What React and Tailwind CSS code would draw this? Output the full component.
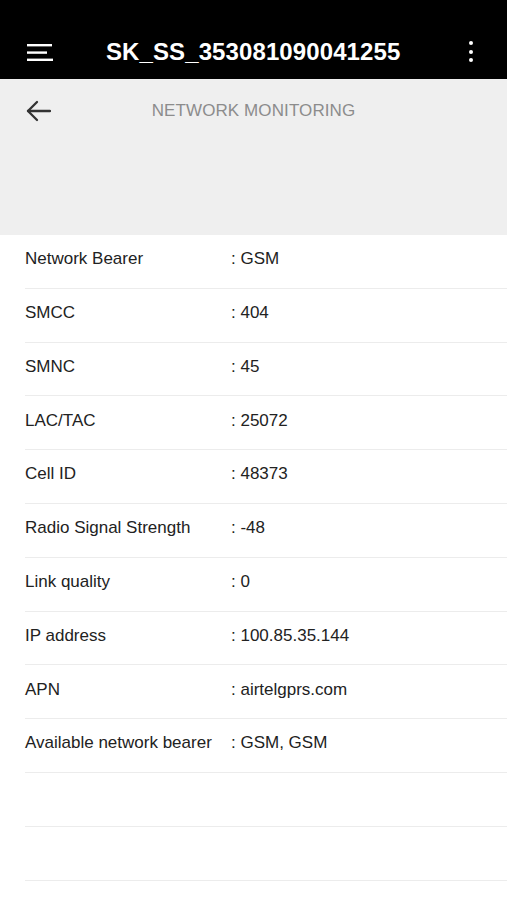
const rows = [
  ["Network Bearer", "GSM"],
  ["SMCC", "404"],
  ["SMNC", "45"],
  ["LAC/TAC", "25072"],
  ["Cell ID", "48373"],
  ["Radio Signal Strength", "-48"],
  ["Link quality", "0"],
  ["IP address", "100.85.35.144"],
  ["APN", "airtelgprs.com"],
  ["Available network bearer", "GSM, GSM"],
  ["", ""],
  ["", ""],
];

export default function App() {
  return (
    <div className="w-[507px] h-[900px] overflow-hidden bg-white font-['Liberation_Sans',Arial,sans-serif]">
      {/* top bar */}
      <div className="h-[79px] bg-black flex items-end pb-[15px] px-[27px] relative">
        <svg width="27" height="18" viewBox="0 0 27 18" className="mb-[2px]">
          <rect x="0" y="0" width="25" height="2.4" fill="#fff" />
          <rect x="0" y="7.4" width="20" height="2.4" fill="#fff" />
          <rect x="0" y="14.6" width="26" height="2.4" fill="#fff" />
        </svg>
        <div className="ml-[52px] text-white text-[24px] font-bold leading-none tracking-[0.1px]">
          SK_SS_353081090041255
        </div>
        <div className="ml-auto mr-[7px] flex flex-col gap-[4.5px] items-center mb-[2px]">
          <span className="w-[4px] h-[4px] rounded-full bg-white" />
          <span className="w-[4px] h-[4px] rounded-full bg-white" />
          <span className="w-[4px] h-[4px] rounded-full bg-white" />
        </div>
      </div>

      {/* sub header */}
      <div className="h-[156px] bg-[#efefef] relative">
        <div className="flex items-center h-[64px] pl-[26px]">
          <svg width="25" height="22" viewBox="0 0 25 22" fill="none" stroke="#333" strokeWidth="2.3" strokeLinecap="round" strokeLinejoin="round">
            <path d="M24 11H2" />
            <path d="M11 2L2 11l9 9" />
          </svg>
        </div>
        <div className="absolute top-[23px] left-0 right-0 text-center text-[17px] text-[#8c8c8c] leading-none tracking-[0.1px]">
          NETWORK MONITORING
        </div>
      </div>

      {/* rows */}
      <div className="pl-[25px]">
        {rows.map(([label, value], i) => (
          <div key={i} className="h-[53.8px] border-b border-[#ececec] flex items-center pb-[5px] text-[17px] text-[#222]">
            <div className="w-[206px]">{label}</div>
            {label && <div>: {value}</div>}
          </div>
        ))}
      </div>
    </div>
  );
}
